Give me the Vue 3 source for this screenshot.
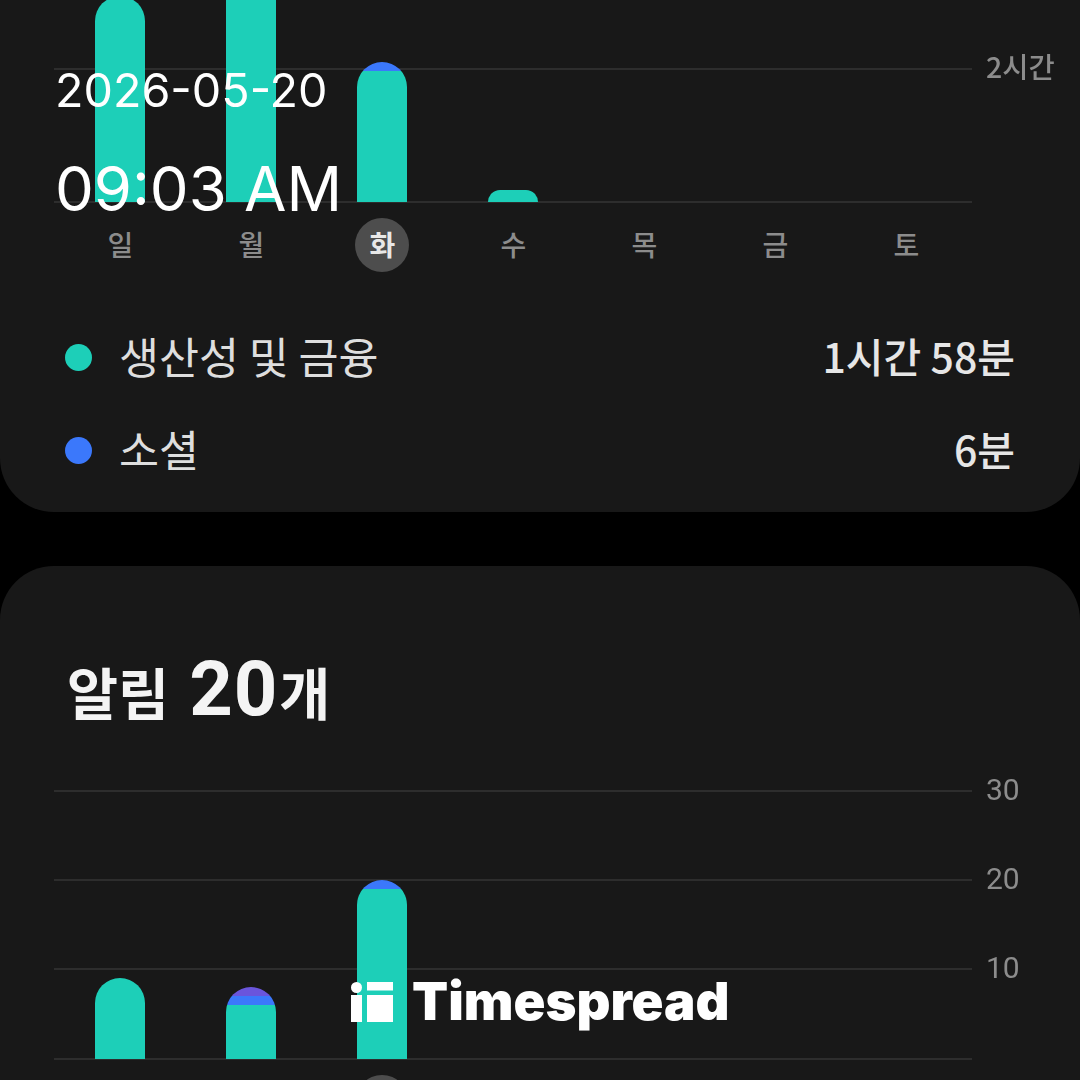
<script setup>
const days = ['일', '월', '화', '수', '목', '금', '토']
const teal = '#1dcfb8'
const blue = '#3b78fb'
const purple = '#6a55dc'
const usage = [
  [{ h: 206, c: teal }],
  [{ h: 262, c: teal }],
  [{ h: 9, c: blue }, { h: 131, c: teal }],
  [{ h: 12, c: teal }],
  [], [], []
]
const alerts = [
  [{ h: 81, c: teal }],
  [{ h: 9, c: purple }, { h: 9, c: blue }, { h: 54, c: teal }],
  [{ h: 9, c: blue }, { h: 170, c: teal }],
  [], [], [], []
]
const alertTicks = [
  { label: '30', h: 89 },
  { label: '20', h: 89 },
  { label: '10', h: 90 },
  { label: '', h: 2 }
]
const usageTicks = [
  { label: '2시간', h: 133 },
  { label: '', h: 2 }
]
const legend = [
  { name: '생산성 및 금융', value: '1시간 58분', c: teal },
  { name: '소셜', value: '6분', c: blue }
]
</script>

<template>
  <div class="page">
    <div class="screen">
      <section class="card card-top">
        <div class="plot">
          <div v-for="t in usageTicks" :key="t.label" class="tick" :style="{ height: t.h + 'px' }">
            <div class="rule"></div>
            <span class="tick-label hangul">{{ t.label }}</span>
          </div>
          <div class="bars">
            <div v-for="(bar, i) in usage" :key="i" class="slot">
              <div v-if="bar.length" class="bar">
                <div v-for="(s, j) in bar" :key="j" :style="{ height: s.h + 'px', background: s.c }"></div>
              </div>
            </div>
          </div>
        </div>
        <div class="days">
          <div v-for="d in days" :key="d" class="day"><span :class="{ today: d === '화' }">{{ d }}</span></div>
        </div>
        <ul class="legend">
          <li v-for="l in legend" :key="l.name" class="legend-row">
            <i class="dot" :style="{ background: l.c }"></i>
            <span class="legend-name">{{ l.name }}</span>
            <span class="legend-value">{{ l.value }}</span>
          </li>
        </ul>
      </section>

      <section class="card card-bottom">
        <h2 class="title">알림<b>20</b><em>개</em></h2>
        <div class="plot">
          <div v-for="t in alertTicks" :key="t.label" class="tick" :style="{ height: t.h + 'px' }">
            <div class="rule"></div>
            <span class="tick-label num">{{ t.label }}</span>
          </div>
          <div class="bars">
            <div v-for="(bar, i) in alerts" :key="i" class="slot">
              <div v-if="bar.length" class="bar">
                <div v-for="(s, j) in bar" :key="j" :style="{ height: s.h + 'px', background: s.c }"></div>
              </div>
            </div>
          </div>
        </div>
        <div class="days">
          <div v-for="(d, i) in days" :key="d" class="day"><span :class="{ today: i === 2 }"></span></div>
        </div>
      </section>
    </div>

    <div class="stamp">
      <div class="date">2026-05-20</div>
      <div class="time">09:03 AM</div>
    </div>

    <div class="brand">
      <svg class="brand-mark" width="43" height="41" viewBox="0 0 43 41" aria-hidden="true">
        <circle cx="5.5" cy="6.5" r="5.5" fill="#fff" />
        <rect x="0" y="14" width="11" height="27" fill="#fff" />
        <rect x="16" y="1" width="26" height="8.5" fill="#fff" />
        <rect x="16" y="14" width="26" height="27" fill="#fff" />
      </svg>
      <span class="brand-name">Timespread</span>
    </div>
  </div>
</template>

<style scoped>
.page {
  position: relative;
  width: 1080px;
  height: 1080px;
  overflow: hidden;
  background: #000;
  font-family: "Noto Sans CJK KR", "Noto Sans", sans-serif;
}
.screen {
  display: flex;
  flex-direction: column;
  height: 1080px;
  filter: blur(0.7px);
}
.card {
  flex: none;
  background: #181818;
}
.card-top {
  height: 512px;
  display: flex;
  flex-direction: column;
  justify-content: flex-end;
  padding-bottom: 15px;
  box-sizing: border-box;
  border-radius: 0 0 54px 54px;
}
.card-bottom {
  height: 514px;
  margin-top: 54px;
  box-sizing: border-box;
  padding-top: 80px;
  border-radius: 54px 54px 0 0;
  overflow: hidden;
}
.title {
  display: flex;
  align-items: baseline;
  margin: 0 0 58px 67px;
  height: 86px;
  line-height: 86px;
  font-size: 55.5px;
  font-weight: 700;
  color: #f4f4f4;
  white-space: nowrap;
}
.title b {
  margin: 0 1px 0 20px;
  font-family: Roboto, sans-serif;
  font-size: 76px;
  font-weight: 700;
  letter-spacing: 1px;
}
.title em {
  font-style: normal;
}
.plot {
  position: relative;
  flex: none;
}
.tick {
  display: flex;
}
.rule {
  flex: none;
  width: 918px;
  height: 2px;
  margin-left: 54px;
  background: #2d2d2d;
}
.tick-label {
  margin-left: 14px;
  height: 0;
  line-height: 0;
  font-size: 28.5px;
  font-weight: 500;
  color: #8c8c8c;
  white-space: nowrap;
}
.hangul {
  margin-top: -2px;
}
.num {
  font-family: Roboto, sans-serif;
  font-size: 30px;
  font-weight: 400;
}
.bars {
  position: absolute;
  left: 54px;
  bottom: 1px;
  display: grid;
  grid-template-columns: repeat(7, 131px);
  align-items: end;
}
.slot {
  display: flex;
  justify-content: center;
}
.bar {
  width: 50px;
  overflow: hidden;
  border-radius: 25px 25px 0 0;
}
.days {
  display: grid;
  grid-template-columns: repeat(7, 131px);
  margin: 15px 0 0 54px;
  width: 917px;
}
.day {
  display: flex;
  justify-content: center;
}
.day span {
  width: 54px;
  height: 54px;
  box-sizing: border-box;
  padding: 0 0 2px 2px;
  border-radius: 50%;
  display: flex;
  align-items: center;
  justify-content: center;
  font-size: 28px;
  font-weight: 500;
  color: #8c8c8c;
}
.day .today {
  background: #4d4d4d;
  color: #e8e8e8;
  font-weight: 700;
}
.legend {
  list-style: none;
  margin: 39px 0 0;
  padding: 0;
}
.legend-row {
  height: 93px;
  display: flex;
  align-items: center;
  padding: 0 65px;
}
.dot {
  flex: none;
  width: 27px;
  height: 27px;
  border-radius: 50%;
  margin-right: 27px;
}
.legend-name {
  flex: 1;
  padding-bottom: 5px;
  font-size: 43.5px;
  font-weight: 400;
  color: #dedede;
  white-space: nowrap;
}
.legend-value {
  padding-bottom: 5px;
  font-size: 41px;
  font-weight: 500;
  color: #e6e6e6;
  white-space: nowrap;
}
.stamp {
  position: absolute;
  left: 55px;
  top: 60px;
  color: #fff;
  font-family: Inter, sans-serif;
}
.date {
  font-size: 46.7px;
  line-height: 60px;
}
.time {
  margin-top: 34px;
  font-size: 61.6px;
  line-height: 70px;
}
.brand {
  position: absolute;
  left: 351px;
  top: 981px;
  display: flex;
  align-items: flex-start;
  gap: 18px;
}
.brand-mark {
  display: block;
}
.brand-name {
  font-family: Inter, sans-serif;
  font-size: 52.7px;
  line-height: 41px;
  font-weight: 900;
  color: #fff;
}
</style>

<style>
html, body { margin: 0; background: #000; }
</style>
